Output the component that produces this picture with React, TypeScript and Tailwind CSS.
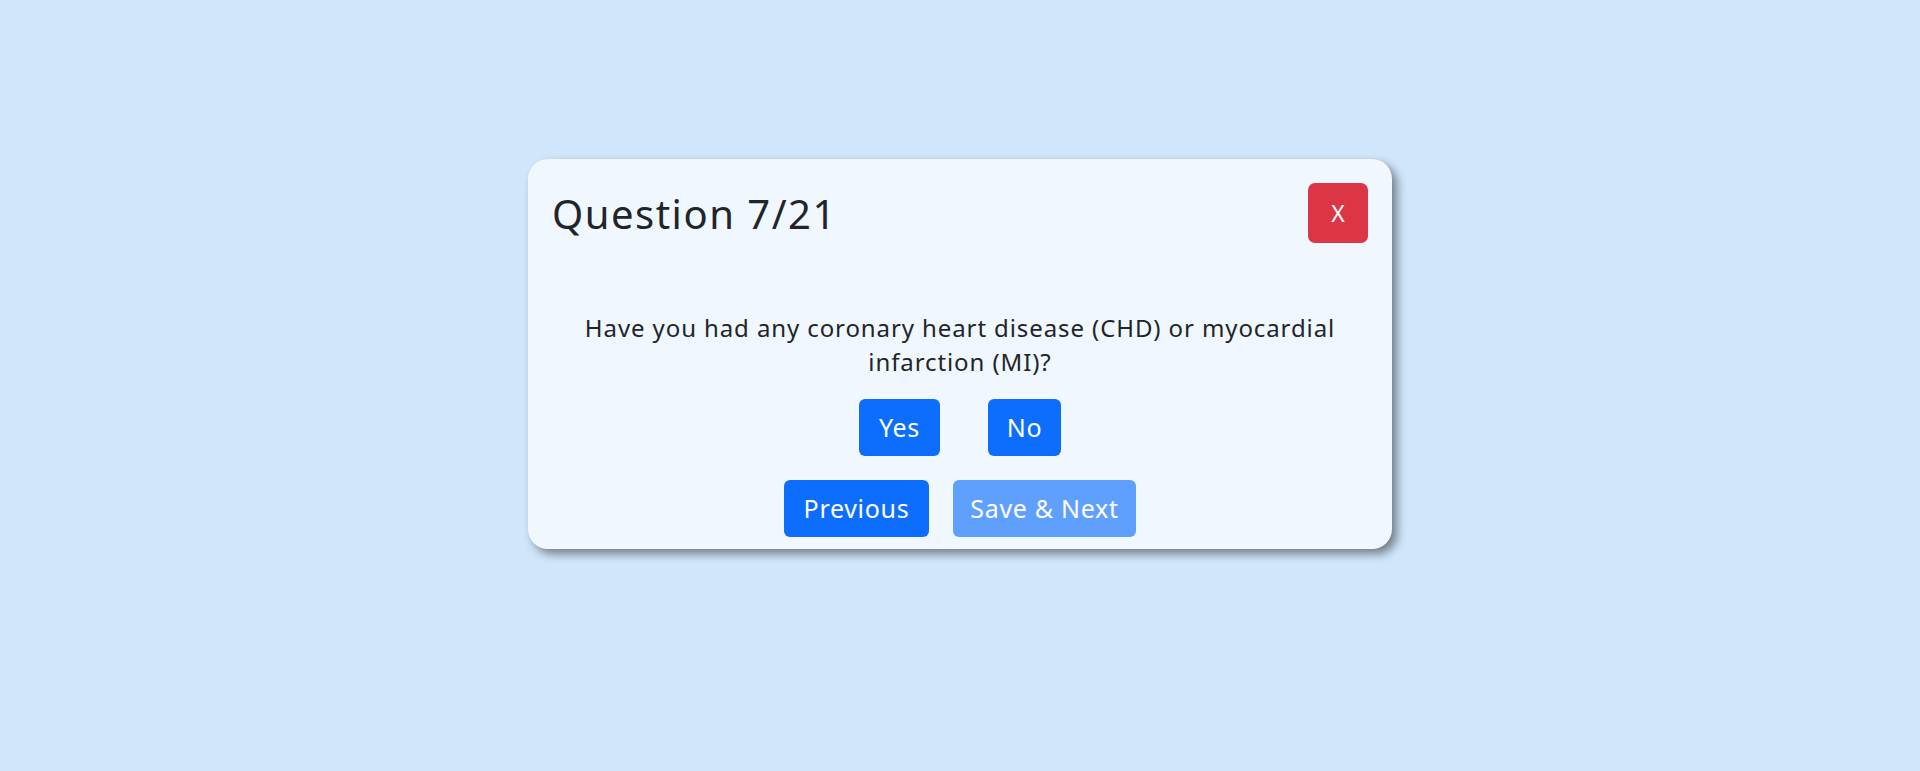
import React from "react";

export default function App() {
  return (
    <div
      className="w-full h-[771px] bg-[#cfe6fb] flex justify-center pt-[159px]"
      style={{ fontFamily: '"Noto Sans", "Open Sans", sans-serif' }}
    >
      <div className="w-[864px] h-[390px] bg-[#f0f7ff] rounded-[20px] shadow-[5px_5px_10px_rgba(0,0,0,0.45)] flex flex-col">
        <div className="flex items-start justify-between pl-[24px] pr-[24px] pt-[24px]">
          <h1 className="mt-[1px] text-[40px] leading-[60px] text-[#212529] font-normal tracking-[1.5px]">Question 7/21</h1>
          <button className="w-[60px] h-[60px] rounded-[7px] bg-[#dc3545] text-white text-[23px] flex items-center justify-center">
            X
          </button>
        </div>
        <div className="mt-[67px] px-[40px] text-center text-[24px] leading-[34px] text-[#212529] tracking-[0.9px]">
          Have you had any coronary heart disease (CHD) or myocardial
          <br />
          infarction (MI)?
        </div>
        <div className="mt-[20px] flex justify-center gap-[48px]">
          <button className="h-[57px] w-[81px] rounded-[6px] bg-[#0d6efd] text-white text-[25px] tracking-[0.6px]">Yes</button>
          <button className="h-[57px] w-[73px] rounded-[6px] bg-[#0d6efd] text-white text-[25px] tracking-[0.6px]">No</button>
        </div>
        <div className="mt-[24px] flex justify-center gap-[24px]">
          <button className="h-[57px] w-[145px] rounded-[6px] bg-[#0d6efd] text-white text-[25px] tracking-[0.7px]">Previous</button>
          <button className="h-[57px] w-[183px] rounded-[6px] bg-[#5f9ffd] text-white text-[25px] tracking-[0.7px]">Save &amp; Next</button>
        </div>
      </div>
    </div>
  );
}
